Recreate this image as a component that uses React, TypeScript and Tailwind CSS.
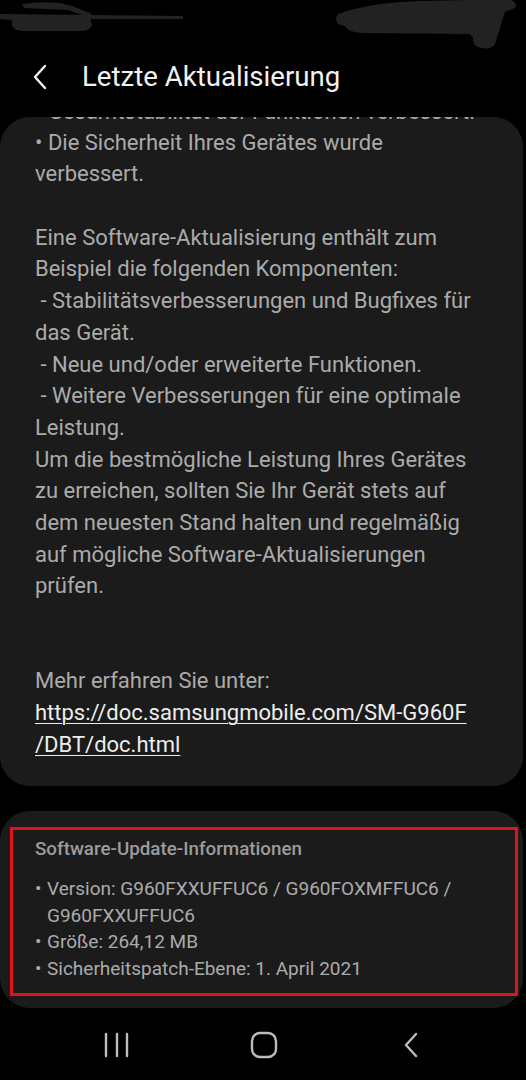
const bodyLines = [
  "• Die Sicherheit Ihres Gerätes wurde",
  "verbessert.",
  "",
  "Eine Software-Aktualisierung enthält zum",
  "Beispiel die folgenden Komponenten:",
  " - Stabilitätsverbesserungen und Bugfixes für",
  "das Gerät.",
  " - Neue und/oder erweiterte Funktionen.",
  " - Weitere Verbesserungen für eine optimale",
  "Leistung.",
  "Um die bestmögliche Leistung Ihres Gerätes",
  "zu erreichen, sollten Sie Ihr Gerät stets auf",
  "dem neuesten Stand halten und regelmäßig",
  "auf mögliche Software-Aktualisierungen",
  "prüfen.",
  "",
  "",
  "Mehr erfahren Sie unter:",
];

const infoItems = [
  ["Version: G960FXXUFFUC6 / G960FOXMFFUC6 /", "G960FXXUFFUC6"],
  ["Größe: 264,12 MB"],
  ["Sicherheitspatch-Ebene: 1. April 2021"],
];

function StatusBar() {
  // redacted status bar: just the scribbles
  return (
    <div className="h-[52px] w-full">
      <svg width="526" height="52" viewBox="0 0 526 52">
        <g fill="#222222">
          <path d="M0 14 L183 16 L183 19 L90 19 L92 25 Q90 31 80 31 L25 31 Q12 31 12 24 L12 20 L0 19 Z" />
          <path d="M22 4 Q40 1 60 3 L72 6 L92 14 L88 17 L68 10 L24 8 Z" />
          <path d="M350 10 Q380 2 420 1 L470 0 L510 0 Q518 2 515 8 L505 12 L500 28 L495 44 Q490 50 482 48 Q472 46 473 38 L470 34 L360 33 Q346 31 345 26 L338 24 Q334 18 338 14 Z" />
        </g>
      </svg>
    </div>
  );
}

export default function App() {
  return (
    <div
      className="relative flex h-[1080px] w-[526px] flex-col overflow-hidden bg-black"
      style={{ fontFamily: "Roboto, 'Noto Sans', sans-serif" }}
    >
      <StatusBar />

      {/* header */}
      <div className="flex h-[50px] items-center">
        <svg className="ml-[31px]" width="18" height="26" viewBox="0 0 18 26">
          <path
            d="M14 2 L4 13 L14 24"
            fill="none"
            stroke="#f2f2f2"
            strokeWidth="2.4"
            strokeLinecap="round"
            strokeLinejoin="round"
          />
        </svg>
        <h1 className="ml-[33px] text-[27.6px] font-normal text-[#f2f2f2]">
          Letzte Aktualisierung
        </h1>
      </div>

      {/* release notes card, scrolled: top line is cut off */}
      <div className="mt-[15px] mr-[3px] overflow-hidden rounded-[30px] bg-[#1b1b1b] pb-[26px] pl-[35px] text-[22px] leading-[31.7px] text-[#ababab]">
        <div className="-mt-[22px] h-[31.7px] whitespace-pre leading-[33.5px]">
          • Gesamtstabilität der Funktionen verbessert.
        </div>
        {bodyLines.map((line, i) => (
          <div key={i} className="h-[31.7px] whitespace-pre">
            {line}
          </div>
        ))}
        <div className="text-[#ededed] underline decoration-1 underline-offset-[3px]">
          https://doc.samsungmobile.com/SM-G960F
          <br />
          /DBT/doc.html
        </div>
      </div>

      {/* info card */}
      <div className="mt-[25px] mr-[3px] rounded-[30px] bg-[#1b1b1b] pt-[16px] pb-[12px] pl-[10px]">
        <div className="w-[508px] border-[3px] border-[#e3131b] pt-[7px] pb-[11px] pl-[22px]">
          <div className="text-[18.8px] leading-[24px] font-medium text-[#9c9c9c]">
            Software-Update-Informationen
          </div>
          <div className="mt-[15px] text-[19px] leading-[26.5px] text-[#ababab]">
            {infoItems.map((lines, i) => (
              <div key={i} className="flex">
                <span className="w-[12px] shrink-0">•</span>
                <span>
                  {lines.map((l, j) => (
                    <div key={j}>{l}</div>
                  ))}
                </span>
              </div>
            ))}
          </div>
        </div>
      </div>

      {/* nav bar */}
      <div className="mt-[24px] flex h-[26px] items-center">
        <svg className="ml-[104px]" width="26" height="26" viewBox="0 0 26 26">
          <g stroke="#bdbdbd" strokeWidth="2.4" strokeLinecap="round">
            <path d="M2 2 V24" />
            <path d="M13 2 V24" />
            <path d="M23 2 V24" />
          </g>
        </svg>
        <svg className="ml-[120px]" width="28" height="28" viewBox="0 0 28 28">
          <rect x="2" y="2" width="24" height="24" rx="8" fill="none" stroke="#bdbdbd" strokeWidth="2.4" />
        </svg>
        <svg className="ml-[124px]" width="18" height="26" viewBox="0 0 18 26">
          <path
            d="M14 2 L4 13 L14 24"
            fill="none"
            stroke="#bdbdbd"
            strokeWidth="2.4"
            strokeLinecap="round"
            strokeLinejoin="round"
          />
        </svg>
      </div>
    </div>
  );
}
